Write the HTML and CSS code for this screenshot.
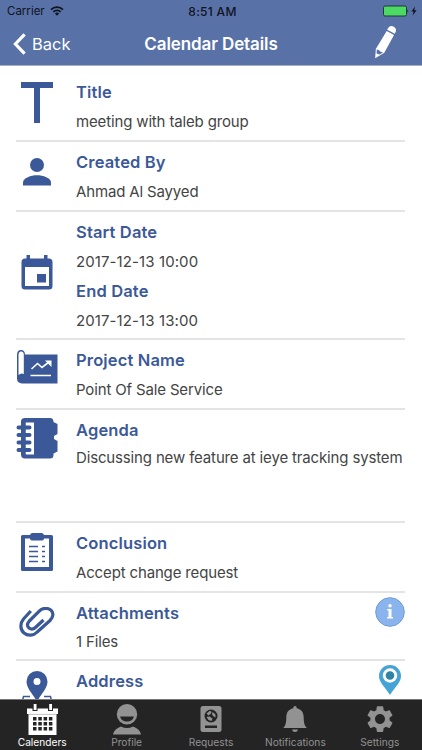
FILE: index.html
```html
<!DOCTYPE html>
<html lang="en">
<head>
   <meta charset="UTF-8">
   <meta name="viewport" content="width=device-width, initial-scale=1.0">
   <title>Calendar Details</title>
   <link rel="stylesheet" href="styles.css">
</head>
<body>
   <header>
      <div class="status-bar">
         <div class="carrier">
            <span>Carrier</span>
            <svg width="14" height="10" viewBox="0 0 14 10" fill="none" stroke="#10131d" stroke-width="1.6">
               <path d="M1 3.6a8.5 8.5 0 0 1 12 0M3.3 5.9a5.2 5.2 0 0 1 7.4 0"/>
               <path d="M7 9.7 4.9 7.6a3 3 0 0 1 4.2 0z" fill="#10131d" stroke="none"/>
            </svg>
         </div>
         <div class="time">8:51 AM</div>
         <div class="battery">
            <svg width="35" height="12" viewBox="0 0 35 12">
               <rect x="0.5" y="1" width="23" height="10" rx="1.5" fill="#4cd964" stroke="#1c3a3a"/>
               <path d="M24.5 4.2q1.6 1.8 0 3.6z" fill="#10131d"/>
               <path d="M32 1.5 28.4 6.6h2.2L29.6 10.5 33.6 5.2h-2.4z" fill="#10131d"/>
            </svg>
         </div>
      </div>
      <nav class="nav-bar">
         <a class="back" href="#">
            <svg width="13" height="22" viewBox="0 0 13 22" fill="none" stroke="#fff" stroke-width="3.2">
               <path d="M11.6 1.3 2.4 11l9.2 9.7"/>
            </svg>
            <span>Back</span>
         </a>
         <h1>Calendar Details</h1>
         <a class="edit" href="#">
            <svg width="23" height="34" viewBox="0 0 23 34">
               <path d="M14.3 2.8Q16 .2 19.3 1.6 22.8 3.6 21.8 6.6L20.8 8.8 13.2 4.8z" fill="#fff"/>
               <path d="M12.7 6 20 10 10.3 27.8 1.2 33.2 1.8 24z" fill="#fff"/>
               <path d="M2.800 24.600 4.800 25 6.200 26.600 9 27.400 5.500 29.500 2.600 28.400z" fill="#5871a7"/>
            </svg>
         </a>
      </nav>
   </header>

   <main>
      <section class="row first">
         <div class="icon">
            <svg width="32" height="41" viewBox="0 0 32 41"><path d="M0 0h32v6H19v35h-6V6H0z"/></svg>
         </div>
         <div class="info">
            <h2>Title</h2>
            <p>meeting with taleb group</p>
         </div>
      </section>
      <section class="row">
         <div class="icon">
            <svg width="28" height="28" viewBox="0 0 28 28">
               <circle cx="14" cy="7" r="7"/>
               <path d="M0 27.500V24.500C0 20 8 17.300 14 17.300S28 20 28 24.500v3z"/>
            </svg>
         </div>
         <div class="info">
            <h2>Created By</h2>
            <p>Ahmad Al Sayyed</p>
         </div>
      </section>
      <section class="row dates">
         <div class="icon">
            <svg width="32" height="35" viewBox="0 0 32 35">
               <path fill-rule="evenodd" d="M5.500 0h3.500v3.500h14V0h3.500v3.500H28a3.500 3.500 0 0 1 3.500 3.500v24a3.500 3.500 0 0 1-3.500 3.500H4A3.500 3.500 0 0 1 .5 31V7A3.500 3.500 0 0 1 4 3.500h1.500zM4 12v19h24V12z"/>
               <path d="M16 19h9v8.500h-9z"/>
            </svg>
         </div>
         <div class="info">
            <h2>Start Date</h2>
            <p>2017-12-13 10:00</p>
            <h2>End Date</h2>
            <p>2017-12-13 13:00</p>
         </div>
      </section>
      <section class="row project">
         <div class="icon">
            <svg width="42" height="34" viewBox="0 0 42 34">
               <path d="M9 4.500h32.500V33.500H6q-5-.5-5-5V5q0-5 4-5t4 5z"/>
               <path d="M2.500 25V5q0-3.500 2.700-3.500T7.800 5v19q-2.800-1.500-5.300 1z" fill="#fff"/>
               <path d="m15.500 19 6-5.500 4.500 4 7-5.500M14.500 25.500h20.500" fill="none" stroke="#fff" stroke-width="1.6"/>
               <path d="M29 10.500h6.500V17z" fill="#fff"/>
            </svg>
         </div>
         <div class="info">
            <h2>Project Name</h2>
            <p>Point Of Sale Service</p>
         </div>
      </section>
      <section class="row agenda">
         <div class="icon">
            <svg width="42" height="41" viewBox="0 0 42 41">
               <path d="M9 0h25q3.500 0 3.500 4l4 2v10L38 18v3l3.500 2v10.500l-4 2v1.500q0 3.500-3.500 3.500H9q-4 0-4-4v-33Q5 0 9 0z"/>
               <path d="M9.500 4.500H18v32H9.500v-3H14v-3H9.500V26H14v-3H9.500v-5H14v-3H9.500v-4H14V8H9.500z" fill="#fff"/>
               <path d="M2.500 9.500h11M2.500 17h11M2.500 24.500h11M2.500 32h11" stroke="#3b5998" stroke-width="4" stroke-linecap="round"/>
               <path d="M7.500 4v33" stroke="#3b5998" stroke-width="4"/>
            </svg>
         </div>
         <div class="info">
            <h2>Agenda</h2>
            <p>Discussing new feature at ieye tracking system</p>
         </div>
      </section>
      <section class="row conclusion">
         <div class="icon">
            <svg width="32" height="38" viewBox="0 0 32 38">
               <path fill-rule="evenodd" d="M1.500 2H9q.5-2 2.500-2h9q2 0 2.500 2h7.500Q32 2 32 3.500v33Q32 38 30.500 38h-29Q0 38 0 36.500v-33Q0 2 1.500 2zM4 5.500V34h24V5.500h-5q0 2-2 2H11q-2 0-2-2z"/>
               <path d="M8 13.500h9M8 18.500h9M8 23.500h9M8 28.500h9M21 13.500h3M21 18.500h3M21 23.500h3M21 28.500h3" stroke="#3b5998" stroke-width="1.500"/>
            </svg>
         </div>
         <div class="info">
            <h2>Conclusion</h2>
            <p>Accept change request</p>
         </div>
      </section>
      <section class="row attachments">
         <div class="icon">
            <svg width="36" height="30" viewBox="0 0 36 30" fill="none" stroke="#3b5998" stroke-width="3.200" stroke-linejoin="round">
               <path d="M11.800 4 4.500 12C.8 16.500 1 22.500 5 26c4 3.300 9.500 2.800 13.200-1L31 13.500c3.600-3.600 3.800-8 .8-10.500-3.200-2.400-8.300-2.200-11.300.8L10.300 14c-2.300 2.800-2.100 5.400-.3 7 2 1.500 4.500 1.300 6.700-.7L24.500 13"/>
            </svg>
         </div>
         <div class="info">
            <h2>Attachments</h2>
            <p>1 Files</p>
         </div>
         <a class="action" href="#">
            <svg width="30" height="30" viewBox="0 0 30 30">
               <circle cx="15" cy="15" r="14.300" fill="#8ab4ed" stroke="#719bd3"/>
               <path d="M12.200 12h4.300v8H18v1.500h-6V20h1.500v-6.500h-1.300z" fill="#fff"/>
               <circle cx="15" cy="8.800" r="1.700" fill="#fff"/>
            </svg>
         </a>
      </section>
      <section class="row address">
         <div class="icon">
            <svg width="32" height="40" viewBox="0 0 32 40">
               <path fill-rule="evenodd" d="M16 0a10.500 10.500 0 0 1 10.500 10.500C26.500 18 19 24 16 31 13 24 5.500 18 5.500 10.500A10.500 10.500 0 0 1 16 0zm0 7a3.500 3.500 0 1 0 0 7 3.500 3.500 0 0 0 0-7z"/>
               <path d="M9 25.500H2.500L0 36M23 25.500h6.500L32 36" fill="none" stroke="#3b5998" stroke-width="1.500"/>
            </svg>
         </div>
         <div class="info">
            <h2>Address</h2>
         </div>
         <a class="action" href="#">
            <svg width="22" height="30" viewBox="0 0 22 30">
               <path d="M11 0a11 11 0 0 1 11 11c0 6-5 10-11 19C5 21 0 17 0 11A11 11 0 0 1 11 0z" fill="#46a3d5"/>
               <circle cx="11" cy="10.500" r="7.200" fill="#fff"/>
               <circle cx="11" cy="10.500" r="4.300" fill="#2f83a5"/>
            </svg>
         </a>
      </section>
   </main>

   <footer>
      <a class="tab active" href="#">
         <svg width="31" height="32" viewBox="0 0 31 32">
            <path d="M0 4.500h31V10H0zM1.500 10h28v21h-28z" fill="#fff"/>
            <path d="M5.500 0h5v7h-5zM21 0h5v7h-5z" fill="#242424"/>
            <path d="M6.700 0h2.800v6H6.700zM22.200 0H25v6h-2.800z" fill="#fff"/>
            <path d="M1.500 10.400h28" stroke="#999" stroke-width=".6"/>
            <path d="M6 13h3.500v3.500H6zm5.300 0h3.500v3.500h-3.500zm5.300 0h3.500v3.500h-3.500zm5.300 0h3.500v3.500h-3.500zM6 18h3.500v3.500H6zm5.300 0h3.500v3.500h-3.500zm5.300 0h3.500v3.500h-3.500zm5.300 0h3.500v3.500h-3.500zM6 23h3.500v3.500H6zm5.300 0h3.500v3.500h-3.500zm5.300 0h3.500v3.500h-3.500zm5.300 0h3.500v3.500h-3.500z" fill="#242424"/>
         </svg>
         <span>Calenders</span>
      </a>
      <a class="tab" href="#">
         <svg width="30" height="32" viewBox="0 0 30 32">
            <circle cx="15" cy="10.200" r="10.200"/>
            <path d="M8 12.500h14q-1.500 5-7 5t-7-5z" fill="#242424"/>
            <path d="M1 30.500q1-5.500 8-8 6 3 12 0 7 2.500 8 8z"/>
         </svg>
         <span>Profile</span>
      </a>
      <a class="tab" href="#">
         <svg width="22" height="32" viewBox="0 0 22 32">
            <rect x="0.500" y="2" width="21" height="26" rx="2.500"/>
            <circle cx="11" cy="12" r="6.500" fill="#242424"/>
            <path d="M6.500 9.500 9.500 7l2 .5-.5 2-2.500 2zM12.500 8l3 2.500v3L13 12l-1-2zM6.500 13l3-.5 3 2-1 2.500-3-1z"/>
            <path d="M5 21.500h12V24H5z" fill="#242424"/>
         </svg>
         <span>Requests</span>
      </a>
      <a class="tab" href="#">
         <svg width="24" height="32" viewBox="0 0 24 32">
            <path d="M12 2q1.800 0 1.800 2.200c4.500 1 6.900 4 6.900 9.300 0 6 1 8 3 10.500H.3c2-2.500 3-4.500 3-10.500 0-5.300 2.400-8.300 6.900-9.300Q10.200 2 12 2zM9 25.500h6q-.5 2.500-3 2.500T9 25.500z"/>
         </svg>
         <span>Notifications</span>
      </a>
      <a class="tab" href="#">
         <svg width="32" height="32" viewBox="-0.500 0.200 25 25">
            <path d="M19.430 12.980c.040-.320.070-.640.070-.980s-.030-.660-.070-.980l2.110-1.650c.190-.150.240-.420.120-.640l-2-3.460c-.120-.220-.390-.300-.610-.220l-2.490 1c-.520-.400-1.080-.730-1.690-.980l-.380-2.650C14.460 2.180 14.250 2 14 2h-4c-.250 0-.460.180-.490.420l-.380 2.650c-.610.250-1.170.590-1.690.980l-2.490-1c-.230-.090-.490 0-.610.220l-2 3.460c-.130.220-.070.490.120.640l2.110 1.650c-.040.320-.070.650-.070.980s.030.660.070.980l-2.110 1.650c-.190.150-.240.420-.120.640l2 3.460c.120.220.390.300.610.220l2.490-1c.520.400 1.080.730 1.690.980l.380 2.650c.030.240.240.420.490.420h4c.250 0 .460-.180.490-.420l.380-2.650c.610-.250 1.170-.590 1.690-.980l2.490 1c.230.090.490 0 .610-.220l2-3.460c.120-.220.070-.490-.120-.640l-2.110-1.650zM12 15.900c-2.150 0-3.900-1.750-3.900-3.900s1.750-3.900 3.900-3.900 3.900 1.750 3.900 3.900-1.750 3.900-3.900 3.900z"/>
         </svg>
         <span>Settings</span>
      </a>
   </footer>
</body>
</html>
```
FILE: styles.css
```css
body {
   margin: 0;
   height: 750px;
   display: flex;
   flex-direction: column;
   overflow: hidden;
   background: #ffffff;
   font-family: Inter, "Liberation Sans", sans-serif;
}

a {
   color: inherit;
   text-decoration: none;
}

svg {
   display: block;
}

header {
   flex: none;
   box-sizing: border-box;
   height: 66px;
   background: #5871a7;
   border-bottom: 1px solid #a4aec6;
}

.status-bar {
   display: grid;
   grid-template-columns: 1fr auto 1fr;
   align-items: center;
   height: 22px;
   padding: 0 4px 0 7px;
   font-size: 11.5px;
   color: #10131d;
}

.carrier {
   display: flex;
   align-items: center;
   gap: 5px;
}

.time {
   font-size: 12px;
   font-weight: 500;
   letter-spacing: 0.3px;
}

.battery {
   justify-self: end;
}

.nav-bar {
   display: grid;
   grid-template-columns: 1fr auto 1fr;
   align-items: center;
   height: 43px;
   padding: 0 13px;
   color: #ffffff;
}

.back {
   display: flex;
   align-items: center;
   gap: 6px;
   font-size: 16.5px;
}

h1 {
   margin: 0;
   font-size: 17px;
   font-weight: 600;
   letter-spacing: -0.1px;
}

.edit {
   justify-self: end;
   margin: -3px 12px 0 0;
}

main {
   flex: 1;
   min-height: 0;
   overflow: hidden;
   padding: 0 17px 0 16px;
}

.row {
   display: flex;
   box-sizing: border-box;
   height: 70px;
   padding-top: 5px;
   border-bottom: 2px solid #e4e4e4;
}

.icon {
   flex: none;
   display: flex;
   justify-content: center;
   width: 42px;
   margin-right: 18px;
   padding-top: 11px;
   fill: #3b5998;
}

.info {
   flex: 1;
   white-space: nowrap;
}

h2,
p {
   margin: 0;
}

h2 {
   font-size: 16.5px;
   font-weight: 600;
   line-height: 31px;
   letter-spacing: 0.15px;
   color: #3b5998;
}

p {
   font-size: 15px;
   line-height: 28px;
   letter-spacing: -0.15px;
   color: #444444;
}

.first {
   height: 76px;
   padding-top: 11px;
}

.first .icon {
   padding-top: 5px;
}

.dates {
   height: 128px;
}

.dates .icon {
   padding-top: 38px;
}

.dates p {
   letter-spacing: 0.1px;
}

.project .icon {
   padding-top: 5px;
}

.agenda {
   height: 113px;
}

.agenda .icon {
   padding-top: 3px;
}

.agenda p {
   line-height: 24px;
}

.conclusion .icon {
   padding-top: 5px;
}

.attachments {
   height: 68px;
}

.attachments .icon {
   padding-top: 9px;
}

.attachments p {
   line-height: 26px;
}

.attachments .action {
   margin-top: -1px;
}

.address {
   border-bottom: none;
}

.address .icon {
   padding-top: 5px;
}

.address .action {
   margin: -1px 4px 0 0;
}

footer {
   flex: none;
   display: grid;
   grid-template-columns: repeat(5, 1fr);
   box-sizing: border-box;
   height: 51px;
   padding-top: 4px;
   background: #242424;
   border-top: 1px solid #777777;
}

.tab {
   display: flex;
   flex-direction: column;
   align-items: center;
   font-size: 10.2px;
   line-height: 13px;
   color: #929292;
   fill: #929292;
}

.active {
   color: #ffffff;
}
```
